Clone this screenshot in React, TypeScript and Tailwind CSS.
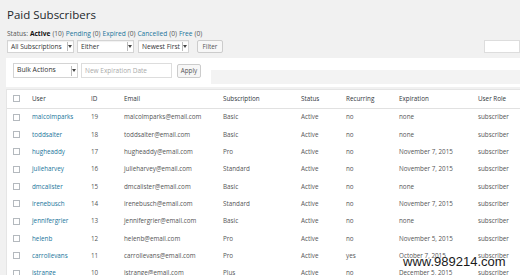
import React from "react";

const rows = [
  ["malcolmparks", "19", "Basic", "no", "none"],
  ["toddsalter", "18", "Basic", "no", "none"],
  ["hugheaddy", "17", "Pro", "no", "November 7, 2015"],
  ["julieharvey", "16", "Standard", "no", "November 7, 2015"],
  ["dmcalister", "15", "Basic", "no", "none"],
  ["irenebusch", "14", "Standard", "no", "November 7, 2015"],
  ["jennifergrier", "13", "Basic", "no", "none"],
  ["helenb", "12", "Pro", "no", "November 5, 2015"],
  ["carrollevans", "11", "Pro", "yes", "October 7, 2015"],
  ["istrange", "10", "Plus", "no", "December 5, 2015"],
];

function Select({ label, w }: { label: string; w: string }) {
  return (
    <div className={`flex h-[13px] items-center border border-[#d4d4d4] bg-white shadow-[inset_0_1px_1px_rgba(0,0,0,0.06)] ${w}`}>
      <span className="flex-1 truncate pl-[3px] text-[6.6px] text-[#333]">{label}</span>
      <span className="mr-[1px] flex h-[9px] w-[5px] items-center justify-center border-l border-[#bbb]">
        <svg width="4" height="3" viewBox="0 0 4 3">
          <path d="M0 0 L4 0 L2 3 Z" fill="#444" />
        </svg>
      </span>
    </div>
  );
}

function Box() {
  return <div className="h-[7px] w-[7px] border border-[#b4b9be] bg-white" />;
}

export default function App() {
  const grid = "grid grid-cols-[25px_59px_33px_99px_78px_45px_53px_79px_1fr] items-center";
  return (
    <div
      className="relative h-[275px] w-[520px] overflow-hidden bg-[#f1f1f1] text-[#444]"
      style={{ fontFamily: '"Open Sans", "Noto Sans", sans-serif' }}
    >
      <div className="pl-[7px] pt-[7px] text-[11.5px] leading-[15px] text-[#23282d]">Paid Subscribers</div>
      <div className="mt-[8px] flex gap-[2px] pl-[7px] text-[6.6px] leading-[8px] text-[#555]">
        <span>Status:</span>
        <span className="font-bold text-[#111]">Active</span>
        <span>(10)</span>
        <span className="text-[#21759b]">Pending</span>
        <span>(0)</span>
        <span className="text-[#21759b]">Expired</span>
        <span>(0)</span>
        <span className="text-[#21759b]">Cancelled</span>
        <span>(0)</span>
        <span className="text-[#21759b]">Free</span>
        <span>(0)</span>
      </div>
      <div className="mt-[2px] flex items-center pl-[7px]">
        <Select label="All Subscriptions" w="w-[67px]" />
        <div className="w-[3px]" />
        <Select label="Either" w="w-[57px]" />
        <div className="w-[4px]" />
        <Select label="Newest First" w="w-[51px]" />
        <div className="w-[8px]" />
        <div className="flex h-[13px] w-[26px] items-center justify-center rounded-[2px] border border-[#ccc] bg-[#f7f7f7] text-[6.3px] text-[#555]">
          Filter
        </div>
        <div className="flex-1" />
        <div className="h-[13px] w-[36px] border border-[#ddd] bg-white" />
      </div>
      <div className="relative ml-[6px] mt-[5px] h-[28px] bg-white">
        <div className="absolute left-[205px] right-0 top-[12px] h-[14px] bg-[#f3f3f3]" />
        <div className="relative flex items-center pl-[7px] pt-[5px]">
          <div className="flex h-[15px] w-[65px] items-center border border-[#d4d4d4] bg-white">
            <span className="flex-1 pl-[3px] text-[6.8px] text-[#333]">Bulk Actions</span>
            <span className="mr-[1px] flex h-[10px] w-[5px] items-center justify-center border-l border-[#bbb]">
              <svg width="4" height="3" viewBox="0 0 4 3">
                <path d="M0 0 L4 0 L2 3 Z" fill="#444" />
              </svg>
            </span>
          </div>
          <div className="ml-[3px] flex h-[15px] w-[91px] items-center border border-[#ddd] bg-white pl-[3px] text-[6.5px] text-[#aaa]">
            New Expiration Date
          </div>
          <div className="ml-[5px] flex h-[14px] w-[24px] items-center justify-center rounded-[2px] border border-[#ccc] bg-[#f7f7f7] text-[6.3px] text-[#555]">
            Apply
          </div>
        </div>
      </div>
      <div className="ml-[6px] h-[1px] bg-white" />
      <div className="ml-[6px] mt-[2px] border-l border-t border-[#e5e5e5] bg-white text-[6.3px]">
        <div className={`${grid} h-[18.5px] border-b border-[#e1e1e1] text-[#32373c]`}>
          <div className="pl-[6px]"><Box /></div>
          <div>User</div>
          <div>ID</div>
          <div>Email</div>
          <div>Subscription</div>
          <div>Status</div>
          <div>Recurring</div>
          <div>Expiration</div>
          <div>User Role</div>
        </div>
        {rows.map((r) => (
          <div key={r[0]} className={`${grid} h-[17.33px] text-[#555]`}>
            <div className="pl-[6px]"><Box /></div>
            <div className="text-[#21759b]">{r[0]}</div>
            <div>{r[1]}</div>
            <div>{r[0]}@email.com</div>
            <div>{r[2]}</div>
            <div>Active</div>
            <div>{r[3]}</div>
            <div>{r[4]}</div>
            <div>subscriber</div>
          </div>
        ))}
      </div>
      <div
        className="absolute left-[403px] top-[254px] text-[13px] leading-[15px] text-[#1a1a1a]"
        style={{ fontFamily: '"Liberation Sans", Arial, sans-serif' }}
      >
        www.989214.com
      </div>
    </div>
  );
}
